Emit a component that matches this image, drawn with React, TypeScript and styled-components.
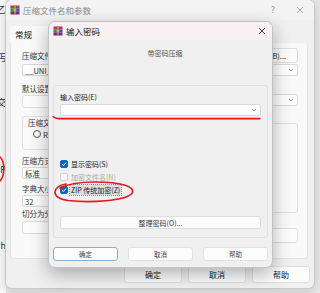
import React from "react";
import styled, { createGlobalStyle } from "styled-components";

const GlobalStyle = createGlobalStyle`
  html, body { margin: 0; padding: 0; }
  body {
    font-family: "Noto Sans CJK SC", "Noto Sans", sans-serif;
    overflow: hidden;
  }
`;

const Desktop = styled.div`
  position: relative;
  width: 320px;
  height: 293px;
  overflow: hidden;
  background: #e6e6e6;
`;

/* window peeking out on the far left */
const BehindWindow = styled.div`
  position: absolute;
  left: -40px;
  top: 0;
  width: 46px;
  height: 293px;
  background: #f6f6f6;
  display: flex;
  flex-direction: column;
  align-items: flex-end;
  color: #333;
`;

const Fragment = styled.div<{ $gap: number; $color?: string }>`
  margin-top: ${(p) => p.$gap}px;
  font-size: 9px;
  line-height: 10px;
  color: ${(p) => p.$color || "#333"};
  white-space: nowrap;
`;

const Window = styled.div`
  position: absolute;
  left: 5px;
  top: -1px;
  width: 310px;
  height: 290px;
  box-sizing: border-box;
  background: #f0f0f0;
  border: 1px solid #c9c9c9;
  border-radius: 7px;
  overflow: hidden;
  display: flex;
  flex-direction: column;
  box-shadow: 0 2px 8px rgba(0, 0, 0, 0.15);
`;

const TitleBar = styled.div<{ $h: number; $bg: string; $pr: number }>`
  height: ${(p) => p.$h}px;
  flex: none;
  background: ${(p) => p.$bg};
  display: flex;
  align-items: center;
  padding: 0 ${(p) => p.$pr}px 0 4px;
`;

const TitleText = styled.span<{ $color: string }>`
  margin-left: 3px;
  font-size: 8.5px;
  line-height: 10px;
  color: ${(p) => p.$color};
`;

const TitleButtons = styled.div<{ $gap: number }>`
  margin-left: auto;
  display: flex;
  align-items: center;
  gap: ${(p) => p.$gap}px;
`;

const HelpMark = styled.span`
  font-family: "DejaVu Sans", sans-serif;
  font-size: 8px;
  color: #9a9a9a;
`;

const TabStrip = styled.div`
  height: 23px;
  flex: none;
  display: flex;
  align-items: flex-end;
  padding-left: 4px;
`;

const Tab = styled.div`
  width: 50px;
  height: 17px;
  background: #f9f9f9;
  border-radius: 3px 3px 0 0;
  padding-left: 5px;
  font-size: 8.5px;
  line-height: 17px;
  color: #111;
`;

const Panel = styled.div`
  height: 216px;
  margin: 0 6px 0 4px;
  box-sizing: border-box;
  background: #f9f9f9;
  border: 1px solid #e4e4e4;
  border-top: none;
  border-radius: 0 3px 3px 3px;
  padding: 5px 9px 0 11px;
`;

const HeaderRow = styled.div`
  height: 15px;
  display: flex;
  align-items: center;
  justify-content: space-between;
`;

const Columns = styled.div`
  display: grid;
  grid-template-columns: 1fr 1fr;
  column-gap: 10px;
`;

const Column = styled.div`
  display: flex;
  flex-direction: column;
`;

const FieldLabel = styled.div<{ $mt: number }>`
  margin-top: ${(p) => p.$mt}px;
  font-size: 7.5px;
  line-height: 10px;
  color: #333;
  white-space: nowrap;
`;

const Field = styled.div<{ $mt: number; $h: number; $w?: number }>`
  margin-top: ${(p) => p.$mt}px;
  height: ${(p) => p.$h}px;
  width: ${(p) => (p.$w ? `${p.$w}px` : "auto")};
  box-sizing: border-box;
  background: #fdfdfd;
  border: 1px solid #dadada;
  border-radius: 2px;
  display: flex;
  align-items: center;
  padding: 0 3px 0 2px;
  font-size: 7.5px;
  color: #333;
`;

const PushButton = styled.div<{ $mt?: number; $h: number; $w?: number; $size: number; $color: string }>`
  margin-top: ${(p) => p.$mt || 0}px;
  height: ${(p) => p.$h}px;
  width: ${(p) => (p.$w ? `${p.$w}px` : "auto")};
  box-sizing: border-box;
  background: #fcfcfc;
  border: 1px solid #dedede;
  border-radius: 3px;
  display: flex;
  align-items: center;
  justify-content: center;
  font-size: ${(p) => p.$size}px;
  color: ${(p) => p.$color};
  white-space: nowrap;
`;

const Group = styled.div<{ $mt: number; $h: number }>`
  margin-top: ${(p) => p.$mt}px;
  height: ${(p) => p.$h}px;
  box-sizing: border-box;
  border: 1px solid #e0e0e0;
  border-radius: 3px;
  padding: 1px 5px 0 10px;
`;

const Legend = styled.div`
  margin-left: -5px;
  font-size: 7.5px;
  line-height: 10px;
  color: #333;
`;

const RadioRow = styled.div`
  height: 12px;
  display: flex;
  align-items: center;
  gap: 2px;
  font-size: 8px;
  color: #333;
`;

const Radio = styled.span`
  width: 8px;
  height: 8px;
  border-radius: 50%;
  border: 1px solid #555;
  box-sizing: border-box;
`;

const Footer = styled.div`
  display: flex;
  justify-content: flex-end;
  gap: 6px;
  padding: 7px 4px 0 0;
`;

/* password dialog on top */
const Dialog = styled.div`
  position: absolute;
  left: 48px;
  top: 21px;
  width: 225px;
  height: 247px;
  box-sizing: border-box;
  background: #f0f0f0;
  border: 1px solid #c4c4c4;
  border-radius: 7px;
  overflow: hidden;
  display: flex;
  flex-direction: column;
  box-shadow: 0 6px 18px rgba(0, 0, 0, 0.3);
`;

const DialogBody = styled.div`
  display: flex;
  flex-direction: column;
  padding: 0 4px;
`;

const Subtitle = styled.div`
  margin-top: 8px;
  padding-left: 9px;
  text-align: center;
  font-size: 7px;
  line-height: 10px;
  color: #555;
`;

const PasswordBox = styled.div`
  margin-top: 27px;
  height: 153px;
  box-sizing: border-box;
  border: 1px solid #e0e0e0;
  border-radius: 3px;
  padding: 6px 6px 0 6px;
  display: flex;
  flex-direction: column;
`;

const SmallLabel = styled.div`
  font-size: 7px;
  line-height: 10px;
  color: #222;
`;

const PasswordInput = styled.div`
  margin-top: 2px;
  height: 12px;
  box-sizing: border-box;
  background: #fff;
  border: 1px solid #d8d8d8;
  border-radius: 2px;
  display: flex;
  align-items: center;
  justify-content: flex-end;
  padding-right: 3px;
`;

const CheckList = styled.div`
  margin-top: 41px;
  display: flex;
  flex-direction: column;
`;

const CheckRow = styled.div`
  height: 13px;
  display: flex;
  align-items: center;
`;

const Box = styled.span<{ $checked: boolean }>`
  width: 8px;
  height: 8px;
  flex: none;
  box-sizing: border-box;
  border-radius: 2px;
  background: ${(p) => (p.$checked ? "#0a64c4" : "#fafafa")};
  border: 1px solid ${(p) => (p.$checked ? "#0a64c4" : "#cfcfcf")};
  display: flex;
  align-items: center;
  justify-content: center;
`;

const CheckText = styled.span<{ $disabled?: boolean; $focused?: boolean }>`
  margin-left: 2px;
  padding: 0 1px;
  font-size: 7px;
  line-height: 10px;
  color: ${(p) => (p.$disabled ? "#a8a8a8" : "#1a1a1a")};
  background: ${(p) => (p.$focused ? "#dcdcdc" : "transparent")};
  outline: ${(p) => (p.$focused ? "1px dotted #8a8a8a" : "none")};
`;

const DialogButtons = styled.div`
  margin-top: 9px;
  display: flex;
  gap: 10px;
`;

const DialogButton = styled.div<{ $default?: boolean }>`
  width: 65px;
  height: 14px;
  box-sizing: border-box;
  background: #fdfdfd;
  border: 1px solid ${(p) => (p.$default ? "#7fb0de" : "#e2e2e2")};
  border-radius: 3px;
  display: flex;
  align-items: center;
  justify-content: center;
  font-size: 6.5px;
  color: #444;
`;

const Overlay = styled.svg`
  position: absolute;
  left: 0;
  top: 0;
  pointer-events: none;
`;

const RarIcon = () => (
  <svg width="10" height="10" viewBox="0 0 10 10">
    <rect x="0.5" y="0.5" width="9" height="3" fill="#b8326e" />
    <rect x="0.5" y="3.5" width="4.5" height="3" fill="#1f9a3c" />
    <rect x="5" y="3.5" width="4.5" height="3" fill="#2a55c8" />
    <rect x="0.5" y="6.5" width="9" height="3" fill="#6b2c92" />
    <rect x="4.2" y="0" width="1.6" height="10" fill="#c9962f" />
    <rect x="3.6" y="4" width="2.8" height="2" fill="#e0b54a" />
  </svg>
);

const Close = ({ color }: { color: string }) => (
  <svg width="8" height="8" viewBox="0 0 8 8">
    <path d="M1 1L7 7M7 1L1 7" stroke={color} strokeWidth="0.9" />
  </svg>
);

const Chevron = () => (
  <svg width="6" height="4" viewBox="0 0 6 4" style={{ marginLeft: "auto" }}>
    <path d="M1 1L3 3L5 1" stroke="#888" strokeWidth="0.8" fill="none" />
  </svg>
);

const Tick = () => (
  <svg width="6" height="6" viewBox="0 0 6 6">
    <path d="M1 3.2L2.4 4.5L5 1.6" stroke="#fff" strokeWidth="1" fill="none" />
  </svg>
);

const checks = [
  { label: "显示密码(S)", checked: true },
  { label: "加密文件名(N)", checked: false, disabled: true },
  { label: "ZIP 传统加密(Z)", checked: true, focused: true },
];

export default function App() {
  return (
    <Desktop>
      <GlobalStyle />

      <BehindWindow>
        <Fragment $gap={5}>压缩乙</Fragment>
        <Fragment $gap={38} $color="#2c3e7a">提示丐</Fragment>
        <Fragment $gap={35}>提交</Fragment>
        <Fragment $gap={57}>ZIP</Fragment>
        <Fragment $gap={66}>帮h</Fragment>
      </BehindWindow>

      <Window>
        <TitleBar $h={20} $bg="#f3f3f3" $pr={10}>
          <RarIcon />
          <TitleText $color="#8a8a8a">压缩文件名和参数</TitleText>
          <TitleButtons $gap={21}>
            <HelpMark>?</HelpMark>
            <Close color="#9a9a9a" />
          </TitleButtons>
        </TitleBar>

        <TabStrip>
          <Tab>常规</Tab>
        </TabStrip>

        <Panel>
          <HeaderRow>
            <FieldLabel $mt={0}>压缩文件名(A)</FieldLabel>
            <PushButton $h={15} $w={55} $size={7.5} $color="#222">
              浏览(B)...
            </PushButton>
          </HeaderRow>
          <Field $mt={1} $h={12}>
            __UNI__文件.zip
            <Chevron />
          </Field>

          <Columns>
            <Column>
              <FieldLabel $mt={8}>默认设置</FieldLabel>
              <PushButton $mt={1} $h={13} $w={90} $size={7.5} $color="#222">
                配置(F)...
              </PushButton>
              <Group $mt={8} $h={34}>
                <Legend>压缩文件格式</Legend>
                <RadioRow>
                  <Radio />
                  RAR
                </RadioRow>
              </Group>
              <FieldLabel $mt={6}>压缩方式(C)</FieldLabel>
              <Field $mt={1} $h={12}>
                标准
                <Chevron />
              </Field>
              <FieldLabel $mt={5}>字典大小(I)</FieldLabel>
              <Field $mt={1} $h={12}>
                32
                <Chevron />
              </Field>
              <FieldLabel $mt={2}>切分为分卷，大小(V)</FieldLabel>
              <Field $mt={2} $h={13} />
            </Column>

            <Column>
              <FieldLabel $mt={8}>更新方式(U)</FieldLabel>
              <Field $mt={0} $h={12}>
                添加并替换文件
                <Chevron />
              </Field>
              <Group $mt={17} $h={90}>
                <Legend>压缩选项</Legend>
              </Group>
              <PushButton $mt={15} $h={15} $size={7.5} $color="#222">
                设置密码(P)...
              </PushButton>
            </Column>
          </Columns>
        </Panel>

        <Footer>
          <PushButton $h={17} $w={58} $size={8} $color="#1a1a1a">
            确定
          </PushButton>
          <PushButton $h={17} $w={58} $size={8} $color="#1a1a1a">
            取消
          </PushButton>
          <PushButton $h={17} $w={58} $size={8} $color="#1a1a1a">
            帮助
          </PushButton>
        </Footer>
      </Window>

      <Dialog>
        <TitleBar $h={18} $bg="#f9f0f4" $pr={6}>
          <RarIcon />
          <TitleText $color="#111">输入密码</TitleText>
          <TitleButtons $gap={0}>
            <Close color="#333" />
          </TitleButtons>
        </TitleBar>

        <DialogBody>
          <Subtitle>带密码压缩</Subtitle>

          <PasswordBox>
            <SmallLabel>输入密码(E)</SmallLabel>
            <PasswordInput>
              <Chevron />
            </PasswordInput>

            <CheckList>
              {checks.map((c) => (
                <CheckRow key={c.label}>
                  <Box $checked={c.checked}>{c.checked && <Tick />}</Box>
                  <CheckText $disabled={c.disabled} $focused={c.focused}>
                    {c.label}
                  </CheckText>
                </CheckRow>
              ))}
            </CheckList>

            <PushButton $mt={20} $h={13} $size={7} $color="#333">
              整理密码(O)...
            </PushButton>
          </PasswordBox>

          <DialogButtons>
            <DialogButton $default>确定</DialogButton>
            <DialogButton>取消</DialogButton>
            <DialogButton>帮助</DialogButton>
          </DialogButtons>
        </DialogBody>
      </Dialog>

      <Overlay width="320" height="293" viewBox="0 0 320 293">
        <g stroke="#e5161d" strokeWidth="1.6" fill="none" strokeLinecap="round">
          <path d="M53 116.5 Q55 118.6 59 118.6 L260 118.6" />
          <path d="M66 184 C52 186 50 198 68 200.5 C90 203 125 201 132 193.5 C136 186 120 182 95 182 C80 182 68 184 60 188" />
          <path d="M0 157 C5 161 5 176 0 181" />
        </g>
      </Overlay>
    </Desktop>
  );
}
